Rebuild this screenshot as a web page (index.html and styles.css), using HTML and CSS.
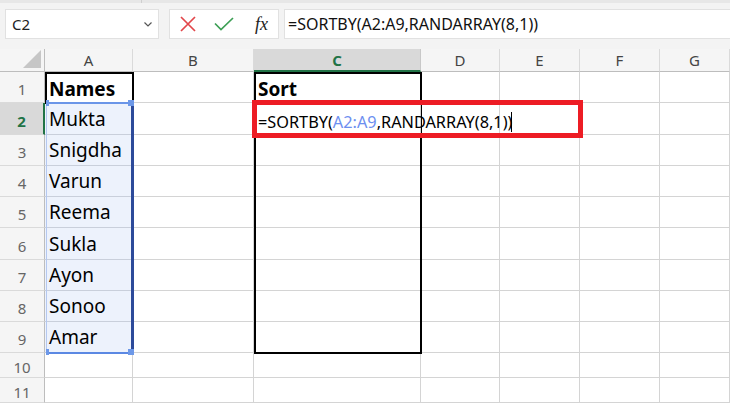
FILE: index.html
```html
<!DOCTYPE html>
<html>
<head>
<meta charset="utf-8">
<link rel="stylesheet" href="styles.css">
</head>
<body>
<div class="app">
  <div class="ribbon-edge"><span class="sep"></span></div>
  <div class="fbar">
    <div class="namebox">
      <span class="ref">C2</span>
      <svg class="chev" viewBox="0 0 8 5"><path d="M0.5 0.5L4 4L7.5 0.5" fill="none" stroke="#555" stroke-width="1.2"/></svg>
    </div>
    <div class="fbtns">
      <svg class="ico-x" viewBox="0 0 16 16"><path d="M1 1L15 15M15 1L1 15" fill="none" stroke="#e2474b" stroke-width="1.7"/></svg>
      <svg class="ico-ok" viewBox="0 0 20 14"><path d="M1 6.5L7 12.5L19 1" fill="none" stroke="#3d9f55" stroke-width="1.7"/></svg>
      <span class="fx">fx</span>
    </div>
    <div class="formula">=SORTBY(A2:A9,RANDARRAY(8,1))</div>
  </div>
  <div class="sheet">
    <div class="corner"><svg viewBox="0 0 18 18"><path d="M18 0L18 18L0 18Z" fill="#c6c6c6"/></svg></div>
    <div class="ch">A</div><div class="ch">B</div><div class="ch sel">C</div><div class="ch">D</div><div class="ch">E</div><div class="ch">F</div><div class="ch">G</div>

    <div class="rh">1</div><div class="c hdr">Names</div><div class="c"></div><div class="c hdr">Sort</div><div class="c"></div><div class="c"></div><div class="c"></div><div class="c"></div>
    <div class="rh sel">2</div><div class="c name">Mukta</div><div class="c"></div><div class="c edit">=SORTBY(<span class="argref">A2:A9</span>,RANDARRAY(8,1))</div><div class="c"></div><div class="c"></div><div class="c"></div><div class="c"></div>
    <div class="rh">3</div><div class="c name">Snigdha</div><div class="c"></div><div class="c"></div><div class="c"></div><div class="c"></div><div class="c"></div><div class="c"></div>
    <div class="rh">4</div><div class="c name">Varun</div><div class="c"></div><div class="c"></div><div class="c"></div><div class="c"></div><div class="c"></div><div class="c"></div>
    <div class="rh">5</div><div class="c name">Reema</div><div class="c"></div><div class="c"></div><div class="c"></div><div class="c"></div><div class="c"></div><div class="c"></div>
    <div class="rh">6</div><div class="c name">Sukla</div><div class="c"></div><div class="c"></div><div class="c"></div><div class="c"></div><div class="c"></div><div class="c"></div>
    <div class="rh">7</div><div class="c name">Ayon</div><div class="c"></div><div class="c"></div><div class="c"></div><div class="c"></div><div class="c"></div><div class="c"></div>
    <div class="rh">8</div><div class="c name">Sonoo</div><div class="c"></div><div class="c"></div><div class="c"></div><div class="c"></div><div class="c"></div><div class="c"></div>
    <div class="rh">9</div><div class="c name">Amar</div><div class="c"></div><div class="c"></div><div class="c"></div><div class="c"></div><div class="c"></div><div class="c"></div>
    <div class="rh">10</div><div class="c"></div><div class="c"></div><div class="c"></div><div class="c"></div><div class="c"></div><div class="c"></div><div class="c"></div>
    <div class="rh">11</div><div class="c"></div><div class="c"></div><div class="c"></div><div class="c"></div><div class="c"></div><div class="c"></div><div class="c"></div>

    <div class="box-a1"></div>
    <div class="box-c"></div>
    <div class="range"></div>
    <div class="handle h-tl"></div>
    <div class="handle h-tr"></div>
    <div class="handle h-bl"></div>
    <div class="handle h-br"></div>
    <div class="redbox"></div>
    <div class="caret"></div>
  </div>
</div>
</body>
</html>
```

FILE: styles.css
```css
* { box-sizing: border-box; }
html, body { margin: 0; padding: 0; }
body { width: 730px; height: 404px; overflow: hidden; background: #fff; font-family: "Noto Sans", "DejaVu Sans", sans-serif; }

.app { width: 730px; height: 404px; overflow: hidden; }

.ribbon-edge { height: 3px; background: #e7e7e7; position: relative; }
.ribbon-edge .sep { position: absolute; left: 141px; top: 0; width: 1px; height: 3px; background: #cfcfcf; }

.fbar { display: flex; align-items: flex-start; height: 46px; padding-top: 6px; background: #f3f3f3; }

.namebox { margin-left: 5px; width: 154px; height: 30px; background: #fff; border: 1px solid #e1e1e1; display: flex; align-items: center; padding-left: 6px; padding-right: 6px; }
.namebox .ref { flex: 1; font-size: 15px; color: #222; }
.namebox .chev { width: 8px; height: 5px; }

.fbtns { margin-left: 10px; width: 110px; height: 30px; background: #fff; border: 1px solid #e1e1e1; display: flex; align-items: center; padding-left: 10px; }
.ico-x { width: 16px; height: 16px; }
.ico-ok { width: 20px; height: 14px; margin-left: 18px; }
.fx { margin-left: 21px; font-family: "Liberation Serif", "DejaVu Serif", serif; font-style: italic; font-size: 18px; color: #222; }

.formula { margin-left: 5px; flex: 1; height: 30px; background: #fff; border: 1px solid #e1e1e1; border-right: none; padding-left: 3px; display: flex; align-items: center; font-size: 16px; color: #111; white-space: nowrap; }

.sheet { position: relative; display: grid; grid-template-columns: 45px 88px 121px 167px 79px 80px 80px 70px; grid-template-rows: 23px 31px 32px 31px 31px 31px 32px 31px 31px 31px 25px 25px; background: #fff; }

.corner { background: #f5f5f5; border-right: 1px solid #bdbdbd; border-bottom: 1px solid #bdbdbd; display: flex; align-items: flex-end; justify-content: flex-end; padding: 0 3px 3px 0; }
.corner svg { width: 18px; height: 18px; display: block; }

.ch { background: #f5f5f5; border-right: 1px solid #dadada; border-bottom: 1px solid #bdbdbd; display: flex; align-items: center; justify-content: center; font-size: 15px; color: #444; }
.ch.sel { background: #d9d9d9; color: #217346; font-weight: 700; border-bottom: 2px solid #217346; border-right-color: #c8c8c8; }

.rh { background: #f5f5f5; border-right: 1px solid #bdbdbd; border-bottom: 1px solid #dadada; display: flex; align-items: center; justify-content: center; padding-top: 4px; font-size: 15px; color: #666; }
.rh.sel { background: #d9d9d9; color: #217346; font-weight: 700; border-right: 2px solid #217346; }

.c { border-right: 1px solid #d4d4d4; border-bottom: 1px solid #d4d4d4; display: flex; align-items: flex-end; padding: 0 0 2px 4px; font-size: 19px; color: #000; white-space: nowrap; line-height: 26px; }
.c.hdr { font-weight: 700; padding-bottom: 0; }
.c.name { background: #edf2fc; border-bottom-color: #c9cfdb; }
.c.edit { font-size: 16.3px; line-height: 22px; padding-bottom: 1px; overflow: visible; position: relative; z-index: 1; }
.argref { color: #6d8ff0; }

.box-a1 { position: absolute; left: 45px; top: 23px; width: 89px; height: 32px; border: 2px solid #000; border-bottom: none; }
.box-c { position: absolute; left: 254px; top: 23px; width: 168px; height: 282px; border: 2px solid #000; }
.range { position: absolute; left: 46px; top: 53px; width: 88px; height: 252px; border-top: 2px solid #6a95e8; border-bottom: 2px solid #5b88e3; border-right: 3px solid #2c4a9a; border-left: 1px solid #b4c8f0; }
.handle { position: absolute; width: 6px; height: 6px; background: #6d98e8; }
.h-tl { left: 46px; top: 51px; width: 3px; }
.h-tr { left: 128px; top: 51px; }
.h-bl { left: 46px; top: 300px; width: 3px; }
.h-br { left: 128px; top: 300px; }

.redbox { position: absolute; left: 252px; top: 51px; width: 331px; height: 38px; border: 5px solid #ed1c24; z-index: 2; }
.caret { position: absolute; left: 511px; top: 63px; width: 1px; height: 20px; background: #000; z-index: 2; }
```
